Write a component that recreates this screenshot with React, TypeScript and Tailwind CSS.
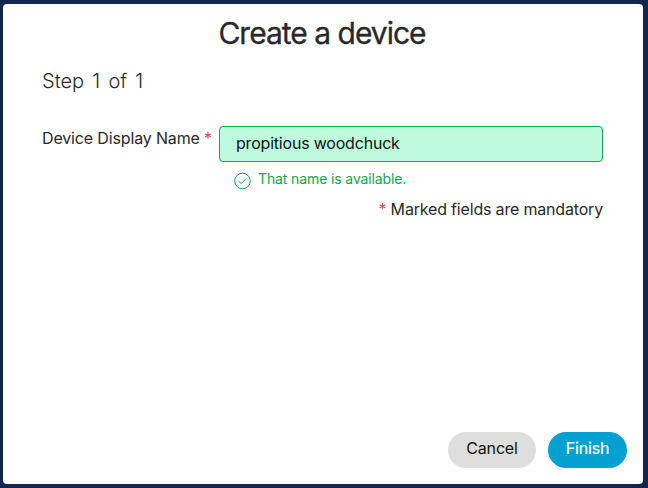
export default function App() {
  return (
    <div className="h-[488px] w-[648px] bg-[#12264f] pt-[4px] pl-[3px] font-['Inter',sans-serif] text-[#292929]">
      <main className="flex h-[480px] w-[640px] flex-col rounded-[4px] bg-white">
        <h1 className="mt-[11px] mr-[2px] h-[36px] text-center text-[30px] leading-[36px] tracking-[-1px] [-webkit-text-stroke:0.3px_#292929]">Create a device</h1>
        <h2 className="mt-[16px] ml-[39px] text-[20px] leading-[28px] font-light [word-spacing:2.6px]">Step 1 of 1</h2>
        <div className="mt-[31px] flex pl-[39px]">
          <label className="w-[177px] text-[16px] leading-[24px] tracking-[-0.15px]">Device Display Name <span className="text-[#dd4650]">*</span></label>
          <div>
            <input className="block h-[36px] w-[384px] rounded-[4px] border border-[#0cab50] bg-[#befade] px-[16px] pb-[2px] text-[16px] tracking-[-0.2px] text-[#121212]" defaultValue="propitious woodchuck" />
            <div className="mt-[9px] ml-[15px] flex gap-[7px] text-[14px] leading-[18px] tracking-[-0.12px] text-[#12a650]">
              <svg className="mt-[1px] size-[17px]" viewBox="0 0 17 17" fill="none" stroke="currentColor"><circle cx="8.5" cy="9" r="7.8"/><path d="m4.7 9.2 2.5 2.4 5-5"/></svg>
              <span className="-mt-px">That name is available.</span>
            </div>
          </div>
        </div>
        <p className="mt-[8px] mr-[40px] text-right text-[16px] leading-[24px] tracking-[-0.18px]"><span className="text-[#dd4650]">*</span> Marked fields are mandatory</p>
        <footer className="mt-auto mr-[16px] mb-[16px] flex justify-end gap-[12px]">
          <button className="h-[36px] w-[88px] rounded-full bg-[#dedede] pb-[4px] text-[16px] tracking-[-0.15px] text-[#121212]">Cancel</button>
          <button className="h-[36px] w-[79px] rounded-full bg-[#00a0d1] pb-[4px] text-[16px] tracking-[-0.15px] text-white [-webkit-text-stroke:0.2px_white]">Finish</button>
        </footer>
      </main>
    </div>
  );
}
